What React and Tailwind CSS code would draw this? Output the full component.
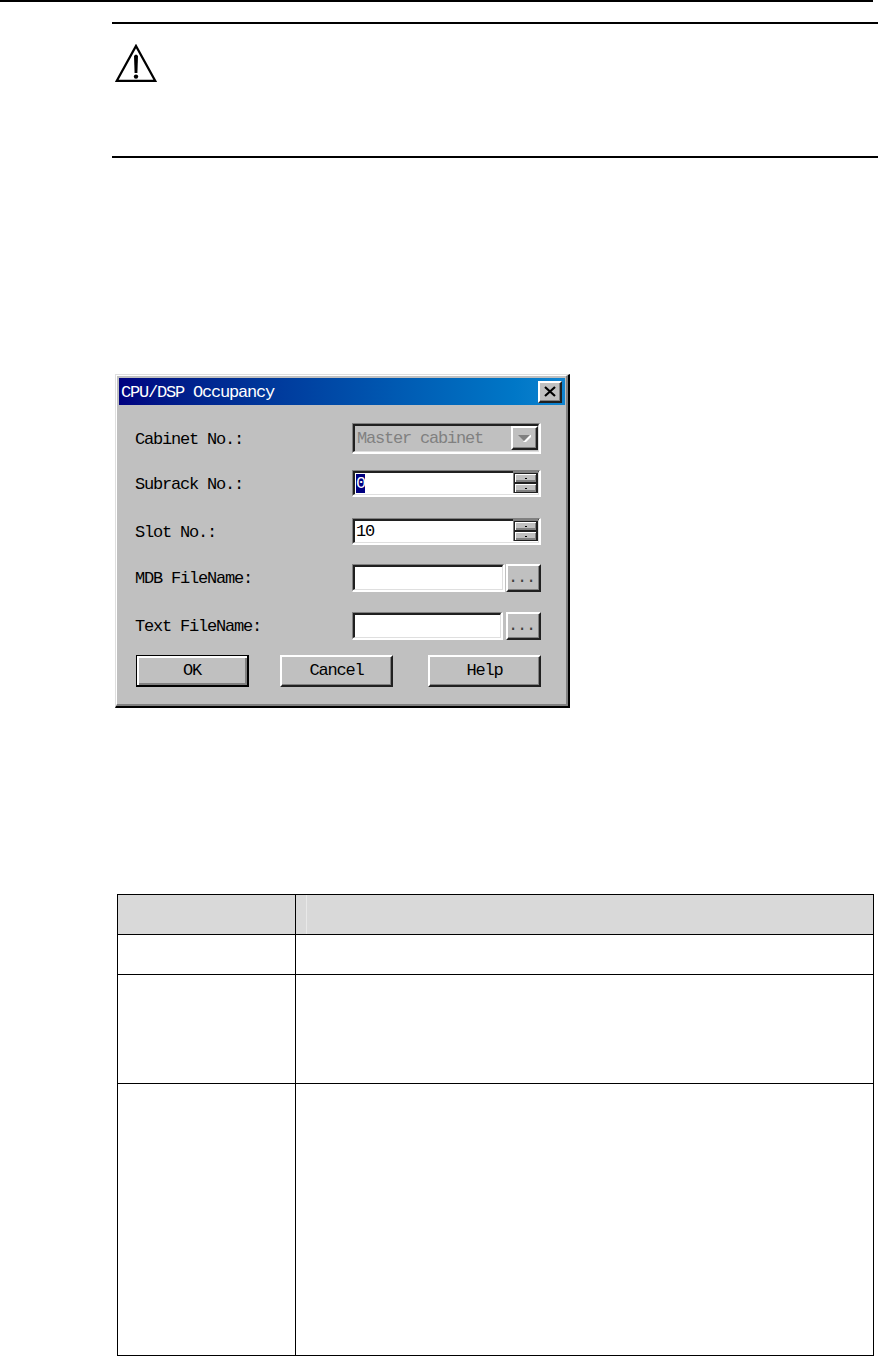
import React, { useState } from 'react';

const tableRows = ['h-[39px]', 'h-[108px]', 'h-[271px]'];

const Label = ({ children }) => (
  <label className="w-[217px] pt-0.5 whitespace-pre">{children}</label>
);

const Sunken = ({ className, children }) => (
  <div className={`flex border-t border-l border-r-2 border-b-2 border-t-[#808080] border-l-[#808080] border-r-white border-b-white ${className}`}>
    <div className="flex flex-1 min-w-0 border-t-2 border-l-2 border-r border-b border-t-[#202020] border-l-[#202020] border-r-[#dfdfdf] border-b-[#dfdfdf]">
      {children}
    </div>
  </div>
);

const SpinHalf = () => (
  <div className="flex items-center justify-center h-[10px] border border-r-2 border-[#202020] bg-[#c0c0c0] shadow-[inset_1px_1px_0_white,inset_-1px_-2px_0_#808080]">
    <span className="w-[2px] h-px bg-black" />
  </div>
);

const SpinField = ({ children, className }) => (
  <Sunken className={`w-[189px] bg-white ${className}`}>
    <div className="flex items-center flex-1 leading-none">{children}</div>
    <div className="w-[25px] h-[22px] -mt-[2px] pt-[2px] border-l border-[#808080] bg-[#808080]">
      <SpinHalf />
      <SpinHalf />
    </div>
  </Sunken>
);

const FileField = ({ width }) => (
  <div className="flex justify-between w-[189px]">
    <Sunken className={`h-[28px] bg-white ${width}`} />
    <button type="button" className="flex items-end justify-center w-[35px] h-[28px] pb-[4px] pr-1 border-2 border-t-white border-l-white border-r-[#202020] border-b-[#202020] shadow-[inset_-1px_-1px_0_#808080] leading-none text-[#404040]">
      ...
    </button>
  </div>
);

const PushButton = ({ children }) => (
  <button type="button" className="w-[113px] h-[32px] border-2 border-t-white border-l-white border-r-[#202020] border-b-[#202020] shadow-[inset_-1px_-1px_0_#808080]">
    {children}
  </button>
);

const OccupancyDialog = () => {
  const [subrack] = useState('0');
  const [slot] = useState('10');

  return (
    <div className="w-[455px] h-[334px] border-t border-l border-b-2 border-r-2 border-t-[#dfdfdf] border-l-[#dfdfdf] border-r-black border-b-black bg-[#c0c0c0] font-['Liberation_Mono',monospace] text-[17px] leading-5 tracking-[-1.2px] text-black">
      <div className="h-full pt-[2px] pl-[2px] pr-px border-t border-l border-r-2 border-b-2 border-t-white border-l-white border-r-[#808080] border-b-[#808080]">
        <div className="flex items-center justify-between h-[27px] pl-[2px] pr-[3px] bg-linear-to-r from-[#000080] to-[#1084d0] text-white">
          <span className="pt-0.5">CPU/DSP Occupancy</span>
          <button type="button" aria-label="Close" className="flex items-center justify-center w-[24px] h-[22px] border-2 border-t-white border-l-white border-r-[#202020] border-b-[#202020] bg-[#c0c0c0] shadow-[inset_-1px_-1px_0_#808080]">
            <svg width="12" height="11" viewBox="0 0 12 11" stroke="black" strokeWidth="2.2">
              <path d="M1 1L11 10M11 1L1 10" />
            </svg>
          </button>
        </div>

        <form className="pt-[18px] pl-4">
          <div className="flex items-center h-[31px] mb-4">
            <Label>Cabinet No.:</Label>
            <Sunken className="w-[189px] h-[31px] text-[#808080]">
              <span className="flex-1 pl-[2px] pt-[3px] whitespace-nowrap">Master cabinet</span>
              <span className="flex items-center justify-center w-[27px] h-[24px] border-2 border-t-white border-l-white border-r-[#202020] border-b-[#202020] shadow-[inset_-1px_-1px_0_#808080]">
                <svg width="15" height="9" viewBox="0 0 15 9">
                  <path d="M6 8H9L14 3V1H12Z" fill="white" />
                  <path d="M1 1H13L7 7Z" fill="#808080" />
                </svg>
              </span>
            </Sunken>
          </div>
          <div className="flex items-center h-[27px] mb-[21px]">
            <Label>Subrack No.:</Label>
            <SpinField className="h-[27px]">
              <span className="w-[9px] h-[19px] ml-px bg-[#000080] text-white leading-[19px]">{subrack}</span>
            </SpinField>
          </div>
          <div className="flex items-center h-[27px] mb-[19px]">
            <Label>Slot No.:</Label>
            <SpinField className="h-[27px]">
              <span className="ml-px">{slot}</span>
            </SpinField>
          </div>
          <div className="flex items-center h-[28px] mb-5">
            <Label>MDB FileName:</Label>
            <FileField width="w-[153px]" />
          </div>
          <div className="flex items-center h-[28px] mb-[15px]">
            <Label>Text FileName:</Label>
            <FileField width="w-[151px]" />
          </div>
          <div className="flex pl-px">
            <button type="button" className="w-[113px] h-[32px] mr-[31px] border border-r-2 border-b-2 border-black shadow-[inset_2px_2px_0_white,inset_-2px_-2px_0_#808080]">
              OK
            </button>
            <PushButton>Cancel</PushButton>
            <div className="ml-[35px]">
              <PushButton>Help</PushButton>
            </div>
          </div>
        </form>
      </div>
    </div>
  );
};

const App = () => {
  return (
    <div className="w-[878px] h-[1356px] overflow-hidden bg-white">
      <div className="w-[873px] h-[2px] bg-black" />

      <div className="h-[136px] mt-5 ml-[112px] pt-5 pl-[3px] border-y-2 border-black">
        <svg width="42" height="38" viewBox="0 0 42 38">
          <path d="M21 2L40.2 36.8H1.8Z" fill="none" stroke="black" strokeWidth="2.3" />
          <path d="M19 12Q21 9 23 12L22.4 29H19.6Z" fill="black" />
          <circle cx="21" cy="32.6" r="2.2" fill="black" />
        </svg>
      </div>

      <div className="mt-[216px] ml-[115px]">
        <OccupancyDialog />
      </div>

      <table className="w-[757px] mt-[186px] ml-[117px] border-separate border-spacing-0 border-t border-l border-black table-fixed">
        <thead>
          <tr className="bg-[#d9d9d9]">
            <th className="w-[178px] h-[40px] p-0 border-r border-b border-black" />
            <th className="p-0 border-r border-b border-black">
              <div className="h-[39px] ml-[10px] border-l border-[#e8e8e8]" />
            </th>
          </tr>
        </thead>
        <tbody>
          {tableRows.map((height) => (
            <tr key={height}>
              <td className="p-0 border-r border-b border-black">
                <div className={height} />
              </td>
              <td className="p-0 border-r border-b border-black" />
            </tr>
          ))}
        </tbody>
      </table>
    </div>
  );
};

export default App;
